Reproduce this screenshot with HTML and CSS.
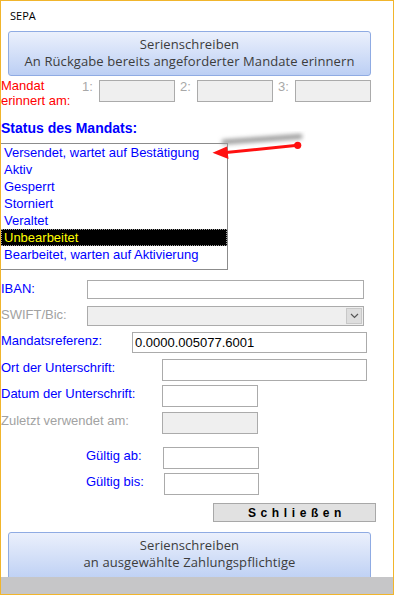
FILE: index.html
```html
<!DOCTYPE html>
<html lang="de">
<head>
  <meta charset="UTF-8" />
  <title>SEPA</title>
  <link rel="stylesheet" href="styles.css">
</head>
<body>

  <div class="frame">
    <div class="content">
      <div class="title">SEPA</div>

      <button class="serien">Serienschreiben<br>An Rückgabe bereits angeforderter Mandate erinnern</button>

      <!-- Erinnerungsdaten -->
      <div class="remind">
        <div class="remind-label">Mandat<br>erinnert am:</div>
        <span class="num">1:</span><span class="box"></span>
        <span class="num">2:</span><span class="box"></span>
        <span class="num">3:</span><span class="box"></span>
      </div>

      <div class="status-title">Status des Mandats:</div>
      <ul class="statuslist">
        <li>Versendet, wartet auf Bestätigung</li>
        <li>Aktiv</li>
        <li>Gesperrt</li>
        <li>Storniert</li>
        <li>Veraltet</li>
        <li class="selected">Unbearbeitet</li>
        <li>Bearbeitet, warten auf Aktivierung</li>
      </ul>

      <!-- Kontodaten -->
      <div class="row row-iban">
        <label class="lbl lbl-s">IBAN:</label>
        <input class="field field-wide" type="text" />
      </div>
      <div class="row row-swift">
        <label class="lbl lbl-s off">SWIFT/Bic:</label>
        <div class="field field-wide combo">
          <span class="combo-btn">
            <svg width="9" height="6" viewBox="0 0 9 6"><path d="M1 1l3.5 3.5L8 1" fill="none" stroke="#555" stroke-width="1.2"/></svg>
          </span>
        </div>
      </div>
      <div class="row row-ref">
        <label class="lbl lbl-m">Mandatsreferenz:</label>
        <input class="field field-ref" type="text" value="0.0000.005077.6001" />
      </div>
      <div class="row row-ort">
        <label class="lbl lbl-l">Ort der Unterschrift:</label>
        <input class="field field-ort" type="text" />
      </div>
      <div class="row row-datum">
        <label class="lbl lbl-l">Datum der Unterschrift:</label>
        <input class="field field-date" type="text" />
      </div>
      <div class="row row-last">
        <label class="lbl lbl-l off">Zuletzt verwendet am:</label>
        <input class="field field-date field-off" type="text" readonly />
      </div>
      <div class="row row-ab">
        <label class="lbl lbl-g">Gültig ab:</label>
        <input class="field field-date" type="text" />
      </div>
      <div class="row row-bis">
        <label class="lbl lbl-g2">Gültig bis:</label>
        <input class="field field-date2" type="text" />
      </div>

      <div class="close-row"><button class="close-btn">Schließen</button></div>

      <button class="serien serien-bottom">Serienschreiben<br>an ausgewählte Zahlungspflichtige</button>
    </div>
    <div class="statusbar"></div>

    <!-- Hinweispfeil -->
    <svg class="pointer" width="100" height="35" viewBox="0 0 100 35">
      <defs>
        <filter id="soft" x="-20%" y="-100%" width="140%" height="300%">
          <feGaussianBlur stdDeviation="2" />
        </filter>
      </defs>
      <line x1="18" y1="13" x2="94" y2="7.5" stroke="#9a9a9a" stroke-width="5" stroke-linecap="round" filter="url(#soft)" />
      <line x1="20" y1="23.6" x2="91.7" y2="16.3" stroke="#ff1010" stroke-width="3" />
      <circle cx="91.7" cy="16.3" r="3.6" fill="#ff1010" />
      <polygon points="6.5,23.8 21,17.5 22.5,30" fill="#ff1010" />
    </svg>
  </div>

</body>
</html>
```

FILE: styles.css
```css
body {
  margin:0; padding:0;
  background:#fff;
  font-family: "Liberation Sans", Arial, sans-serif;
  font-size:13px;
}
.frame {
  position:relative;
  width:394px;
  height:595px;
  box-sizing:border-box;
  border:1px solid #f1b52c;
  background:#fff;
}
.content {
  height:576px;
  overflow:hidden;
}
.statusbar {
  height:17px;
  background:#c6c6c8;
}
.title {
  font-family:"Open Sans", sans-serif;
  font-size:11px;
  line-height:15px;
  padding:7px 0 0 9px;
}

/* blaue Schaltflächen */
.serien {
  display:block;
  width:363px;
  height:45px;
  margin:8px 0 0 7px;
  padding:0 0 2px;
  border:1px solid #8fabe3;
  border-radius:3px;
  background:linear-gradient(#ebf0fc, #bccff4);
  color:#3c3c3c;
  font-family:"Open Sans", sans-serif;
  font-size:13px;
  letter-spacing:0.1px;
  line-height:17px;
  text-align:center;
}
.serien-bottom {
  height:50px;
  margin-top:10px;
  padding:0 0 7px;
}

.remind {
  display:flex;
  margin-top:2px;
  height:30px;
}
.remind-label {
  width:81px;
  color:#ff0000;
  line-height:15px;
}
.num {
  width:17px;
  color:#a8a8a8;
  line-height:15px;
  padding-top:1px;
}
.box {
  width:76px;
  height:22px;
  margin:2px 5px 0 0;
  box-sizing:border-box;
  border:1px solid #ababab;
  background:#efefef;
}
.status-title {
  margin-top:12px;
  font-weight:bold;
  font-size:14px;
  line-height:16px;
  color:#0000ff;
}
.statuslist {
  list-style:none;
  margin:7px 0 0;
  padding:0 0 6px;
  width:227px;
  box-sizing:border-box;
  border:1px solid #8c8c8c;
  border-left:none;
}
.statuslist li {
  height:17px;
  line-height:17px;
  padding-left:3px;
  color:#0000ff;
  white-space:nowrap;
}
.statuslist li.selected {
  background:#000;
  color:#ffff00;
  outline:1px dotted #a0a0a0;
  outline-offset:-1px;
}

/* Formularzeilen */
.row {
  display:flex;
  align-items:flex-start;
}
.lbl {
  flex:none;
  color:#0000ff;
  line-height:15px;
  padding-top:1px;
  white-space:nowrap;
}
.lbl.off { color:#a2a2a2; }
.lbl-s { width:86px; }
.lbl-m { width:131px; }
.lbl-l { width:161px; }
.lbl-g { width:77px; padding-left:85px; }
.lbl-g2 { width:78px; padding-left:85px; }
.field {
  box-sizing:border-box;
  margin:0;
  padding:0 2px;
  border:1px solid #ababab;
  background:#fff;
  font-family:"Liberation Sans", Arial, sans-serif;
  font-size:13px;
  color:#000;
  height:22px;
  outline:none;
}
.field-wide { width:277px; }
.field-ref { width:235px; height:21px; }
.field-ort { width:205px; }
.field-date { width:96px; }
.field-date2 { width:95px; }
.field-off { background:#efefef; }

.row-iban { margin-top:10px; }
.row-iban .field { height:19px; }
.row-swift { margin-top:7px; }
.row-ref { margin-top:6px; }
.row-ort { margin-top:6px; }
.row-datum { margin-top:4px; }
.row-last { margin-top:5px; }
.row-ab { margin-top:13px; }
.row-bis { margin-top:4px; }

.combo {
  height:20px;
  background:#efefef;
  display:flex;
  justify-content:flex-end;
  padding:1px;
}
.combo-btn {
  width:16px;
  height:16px;
  box-sizing:border-box;
  border:1px solid #c8c8c8;
  background:#dedede;
  display:flex;
  align-items:center;
  justify-content:center;
}

.close-row {
  margin-top:8px;
  padding-left:212px;
}
.close-btn {
  display:block;
  width:163px;
  height:19px;
  margin:0;
  padding:0 0 0 5px;
  box-sizing:border-box;
  border:1px solid #a8a8a8;
  background:#e1e1e1;
  font-family:"Liberation Sans", Arial, sans-serif;
  font-weight:bold;
  font-size:12px;
  letter-spacing:4.6px;
  color:#000;
}

.pointer {
  position:absolute;
  left:205px;
  top:128px;
}
```
